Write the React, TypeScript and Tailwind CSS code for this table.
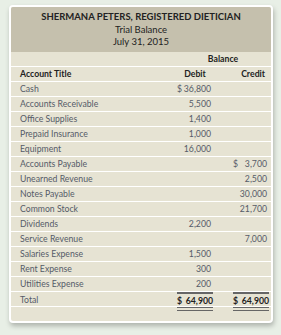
const rows: { title: string; debit?: string; credit?: string; dDollar?: boolean; cDollar?: boolean }[] = [
  { title: "Cash", debit: "36,800", dDollar: true },
  { title: "Accounts Receivable", debit: "5,500" },
  { title: "Office Supplies", debit: "1,400" },
  { title: "Prepaid Insurance", debit: "1,000" },
  { title: "Equipment", debit: "16,000" },
  { title: "Accounts Payable", credit: "3,700", cDollar: true },
  { title: "Unearned Revenue", credit: "2,500" },
  { title: "Notes Payable", credit: "30,000" },
  { title: "Common Stock", credit: "21,700" },
  { title: "Dividends", debit: "2,200" },
  { title: "Service Revenue", credit: "7,000" },
  { title: "Salaries Expense", debit: "1,500" },
  { title: "Rent Expense", debit: "300" },
  { title: "Utilities Expense", debit: "200" },
];

const grid = "grid grid-cols-[166px_36px_20px_36px_1fr] items-center";

function Amount({ value, dollar }: { value?: string; dollar?: boolean }) {
  if (!value) return <div />;
  return (
    <div className="flex justify-between pr-[2px]">
      <span>{dollar ? "$" : ""}</span>
      <span>{value}</span>
    </div>
  );
}

export default function App() {
  return (
    <div
      className="w-[281px] h-[335px] bg-[#e8efe6] pt-[5px] pl-[9px]"
      style={{ fontFamily: 'Lato, "Open Sans", sans-serif' }}
    >
      <div className="w-[264px] border-2 border-white rounded-[4px] bg-[#e6e3d3] overflow-hidden shadow-[1px_3px_5px_rgba(0,0,0,0.25)]">
        {/* heading */}
        <div className="h-[45px] bg-[#c5c0ad] pt-[4px] text-center text-[#222] text-[9.5px] leading-[12.5px]">
          <div className="font-bold">SHERMANA PETERS, REGISTERED DIETICIAN</div>
          <div>Trial Balance</div>
          <div>July 31, 2015</div>
        </div>

        <div className={`${grid} h-[15px] border-b border-white text-[8.7px] font-bold text-[#222]`}>
          <div />
          <div className="col-span-3 text-center">Balance</div>
        </div>

        <div className={`${grid} h-[15px] border-b border-white text-[8.7px] font-bold text-[#222]`}>
          <div className="pl-[9px]">Account Title</div>
          <div className="text-center">Debit</div>
          <div />
          <div className="text-right pr-[4px]">Credit</div>
        </div>

        {rows.map((r) => (
          <div key={r.title} className={`${grid} h-[15px] border-b border-white text-[8.7px] text-[#555b68]`}>
            <div className="pl-[9px]">{r.title}</div>
            <Amount value={r.debit} dollar={r.dDollar} />
            <div />
            <Amount value={r.credit} dollar={r.cDollar} />
          </div>
        ))}

        <div className={`${grid} h-[15px] border-b border-white text-[8.7px] text-[#555b68]`}>
          <div className="pl-[9px]">Total</div>
          <div className="h-full flex items-center justify-between border-t-2 border-[#666] font-bold text-[#222]">
            <span>$</span>
            <span>64,900</span>
          </div>
          <div />
          <div className="h-full flex items-center justify-between border-t-2 border-[#666] font-bold text-[#222]">
            <span>$</span>
            <span>64,900</span>
          </div>
        </div>

        <div className={`${grid} h-[14px] items-start`}>
          <div />
          <div className="border-t-4 border-double border-[#666]" />
          <div />
          <div className="border-t-4 border-double border-[#666]" />
        </div>
      </div>
    </div>
  );
}
